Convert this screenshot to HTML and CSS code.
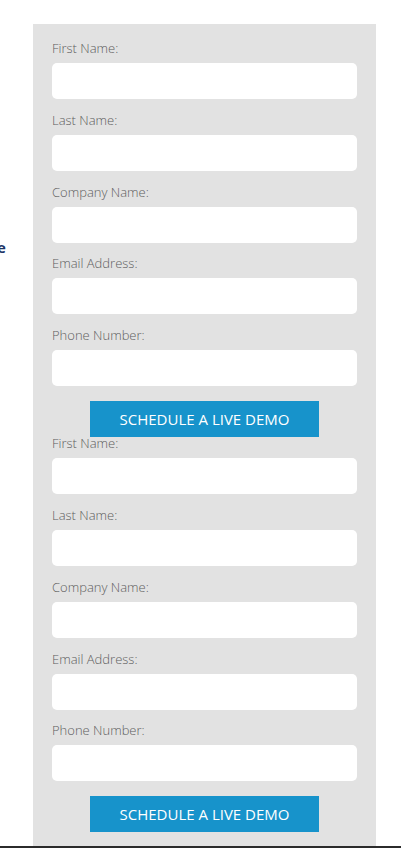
FILE: index.html
```html
<!DOCTYPE html>
<html lang="en">
<head>
<meta charset="utf-8">
<title>Schedule a Live Demo</title>
<link rel="stylesheet" href="styles.css">
</head>
<body>
<div class="page">
  <div class="side">
    <p class="side-text">e</p>
  </div>
  <div class="panel">
    <form class="demo-form">
      <label class="field-label">First Name:</label>
      <input class="field-input" type="text">
      <label class="field-label">Last Name:</label>
      <input class="field-input" type="text">
      <label class="field-label">Company Name:</label>
      <input class="field-input" type="text">
      <label class="field-label">Email Address:</label>
      <input class="field-input" type="text">
      <label class="field-label">Phone Number:</label>
      <input class="field-input" type="text">
      <div class="btn-row"><button class="demo-btn" type="button">SCHEDULE A LIVE DEMO</button></div>
    </form>
    <form class="demo-form">
      <label class="field-label">First Name:</label>
      <input class="field-input" type="text">
      <label class="field-label">Last Name:</label>
      <input class="field-input" type="text">
      <label class="field-label">Company Name:</label>
      <input class="field-input" type="text">
      <label class="field-label">Email Address:</label>
      <input class="field-input" type="text">
      <label class="field-label">Phone Number:</label>
      <input class="field-input" type="text">
      <div class="btn-row"><button class="demo-btn" type="button">SCHEDULE A LIVE DEMO</button></div>
    </form>
  </div>
</div>
<div class="bottom-bar"></div>
</body>
</html>
```
FILE: styles.css
```css
html, body {
  margin: 0;
  padding: 0;
  background: #ffffff;
  font-family: "Open Sans", "Liberation Sans", sans-serif;
  overflow: hidden;
}
.page {
  display: flex;
  align-items: flex-start;
}
.side {
  width: 33px;
  flex: 0 0 33px;
  overflow: hidden;
  padding-top: 237px;
}
.side-text {
  margin: 0 0 0 -3px;
  font-size: 15px;
  font-weight: 700;
  color: #1d3566;
  line-height: 20px;
}
.panel {
  width: 343px;
  flex: 0 0 343px;
  margin-top: 24px;
  background: #e2e2e2;
  padding: 15px 19px 40px;
  box-sizing: border-box;
}
.demo-form {
  display: flex;
  flex-direction: column;
  margin: 0;
}
.field-label {
  font-size: 13px;
  font-weight: 300;
  color: #5e5e5e;
  line-height: 18px;
  margin-bottom: 6px;
}
.field-input {
  height: 36px;
  box-sizing: border-box;
  border: none;
  border-radius: 5px;
  background: #ffffff;
  margin: 0 0 11.8px;
  padding: 0 8px;
  width: 305px;
}
.field-input:last-of-type {
  margin-bottom: 0;
}
.btn-row {
  display: flex;
  justify-content: center;
  margin-top: 15px;
}
.demo-btn {
  width: 229px;
  height: 36px;
  border: none;
  border-radius: 0;
  background: #1793cb;
  color: #ffffff;
  font-family: "Open Sans", "Liberation Sans", sans-serif;
  font-size: 15px;
  font-weight: 400;
  padding: 0;
  margin-bottom: -3px;
}
.bottom-bar {
  position: fixed;
  left: 0;
  right: 0;
  bottom: 0;
  height: 2px;
  background: #2b2b2b;
}
```
